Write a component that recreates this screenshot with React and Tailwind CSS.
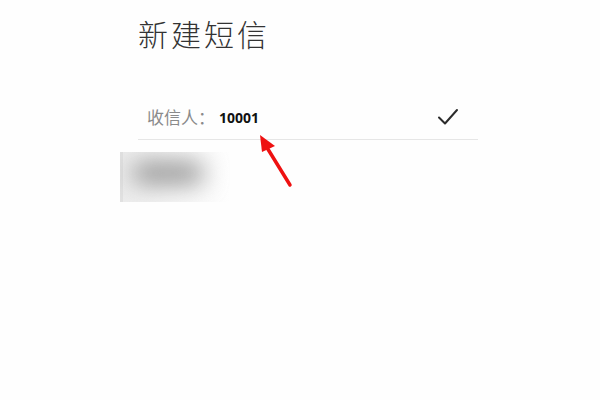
const cjk = { fontFamily: '"Noto Sans CJK SC", "Noto Sans", sans-serif' };

const CheckIcon = () => (
  <svg width="22" height="20" viewBox="0 0 22 20" fill="none">
    <path d="M2 10.5 L8 16.5 L20 3" stroke="#2b2b2b" strokeWidth="2" strokeLinecap="round" strokeLinejoin="round" />
  </svg>
);

const Arrow = () => (
  <svg className="absolute left-0 top-0" width="600" height="400" viewBox="0 0 600 400">
    <line x1="290" y1="185" x2="266" y2="146" stroke="#ee1111" strokeWidth="3.5" strokeLinecap="round" />
    <polygon points="260,135 275,146 262,152" fill="#ee1111" />
  </svg>
);

export default function App() {
  return (
    <div className="relative w-[600px] h-[400px] overflow-hidden bg-[#fefefe]" style={cjk}>
      <div className="ml-[138px] w-[340px]">
        <h1 className="pt-[18px] text-[30px] leading-[30px] font-light text-[#333] tracking-[3px]">
          新建短信
        </h1>

        <div className="mt-[47px] h-[45px] flex items-center justify-between border-b border-[#e6e6e6]">
          <div className="flex items-center pl-[9px]">
            <span className="text-[17px] text-[#8a8a8a]">收信人：</span>
            <span
              className="ml-[4px] text-[14px] font-bold text-[#111]"
              style={{ fontFamily: '"Noto Sans", sans-serif' }}
            >
              10001
            </span>
          </div>
          <div className="mr-[19px] flex items-center">
            <CheckIcon />
          </div>
        </div>
      </div>

      <div className="ml-[120px] mt-[12px] w-[110px] h-[50px] relative overflow-hidden bg-gradient-to-r from-[#ececec] via-[#f6f6f6] to-[#fefefe]">
        <div className="absolute left-0 top-0 w-[3px] h-full bg-[#e2e2e2]" />
        <div className="absolute left-[12px] top-[11px] w-[72px] h-[20px] rounded-full bg-[#8c8c8c] blur-md" />
      </div>

      <Arrow />
    </div>
  );
}
